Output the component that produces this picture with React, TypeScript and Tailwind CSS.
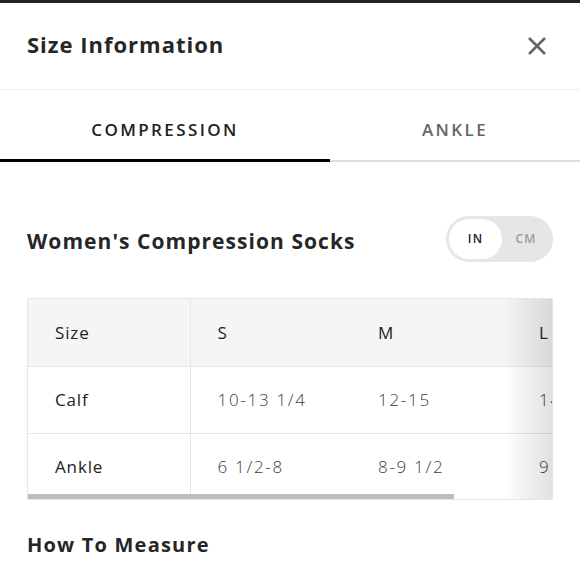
import { useState } from "react";

const rows = [
    { label: "Calf", values: ["10-13 1/4", "12-15", "14-17"] },
    { label: "Ankle", values: ["6 1/2-8", "8-9 1/2", "9 1/2-11"] },
];

const sizes = ["S", "M", "L"];

export default function App() {
    const [tab, setTab] = useState<"compression" | "ankle">("compression");
    const [unit, setUnit] = useState<"in" | "cm">("in");

    return (
        <div className="h-[580px] w-[580px] overflow-hidden bg-white text-[#222]" style={{ fontFamily: "'Open Sans', Lato, sans-serif" }}>
            <div className="h-[3px] bg-[#232323]" />

            {/* Header */}
            <div className="flex h-[87px] items-center justify-between border-b border-[#f0f0f0] pl-[27px] pr-[33px]">
                <h2 className="pb-[3px] text-[22px] font-bold tracking-[0.045em] text-[#262626]">Size Information</h2>
                <button className="text-[#666]" aria-label="Close">
                    <svg width="20" height="20" viewBox="0 0 20 20" fill="none" stroke="currentColor" strokeWidth="2.6">
                        <path d="M2 2L18 18M18 2L2 18" />
                    </svg>
                </button>
            </div>

            {/* Tabs */}
            <div className="flex h-[72px]">
                <button
                    onClick={() => setTab("compression")}
                    className={`w-[330px] border-b-[3px] pt-[10px] text-[17px] font-semibold tracking-[0.14em] ${tab === "compression" ? "border-black text-[#222]" : "border-[#ddd] text-[#666]"}`}
                >
                    COMPRESSION
                </button>
                <button
                    onClick={() => setTab("ankle")}
                    className={`flex-1 pt-[10px] text-[17px] font-semibold tracking-[0.14em] ${tab === "ankle" ? "border-b-[3px] border-black text-[#222]" : "border-b-2 border-[#ddd] text-[#666]"}`}
                >
                    ANKLE
                </button>
            </div>

            {/* Title + unit toggle */}
            <div className="mt-[54px] flex items-center justify-between pl-[27px] pr-[27px]">
                <h3 className="pt-[6px] text-[21px] font-bold tracking-[0.05em] text-[#262626]">Women's Compression Socks</h3>
                <div className="flex h-[46px] w-[107px] items-center rounded-full bg-[#e6e6e6] p-[3px]">
                    <button
                        onClick={() => setUnit("in")}
                        className={`flex h-full w-[53px] items-center justify-center rounded-full text-[12px] font-semibold tracking-[0.1em] ${unit === "in" ? "bg-white text-[#222]" : "text-[#9a9a9a]"}`}
                    >
                        IN
                    </button>
                    <button
                        onClick={() => setUnit("cm")}
                        className={`flex h-full flex-1 items-center justify-center rounded-full text-[12px] font-semibold tracking-[0.1em] ${unit === "cm" ? "bg-white text-[#222]" : "text-[#9a9a9a]"}`}
                    >
                        CM
                    </button>
                </div>
            </div>

            {/* Table */}
            <div className="relative mx-[27px] mt-[36px] h-[202px] overflow-hidden border border-[#e6e6e6]">
                <table className="w-[700px] table-fixed border-collapse text-[17px]">
                    <colgroup>
                        <col className="w-[162px]" />
                        <col className="w-[161px]" />
                        <col className="w-[161px]" />
                        <col className="w-[216px]" />
                    </colgroup>
                    <thead>
                        <tr className="h-[67px] bg-[#f5f5f5]">
                            <th className="border-r border-[#e6e6e6] pl-[27px] text-left font-normal tracking-[0.05em] text-[#222]">Size</th>
                            {sizes.map((s) => (
                                <th key={s} className="pl-[27px] text-left font-normal text-[#222]">{s}</th>
                            ))}
                        </tr>
                    </thead>
                    <tbody>
                        {rows.map((r) => (
                            <tr key={r.label} className="h-[67px] border-t border-[#e6e6e6]">
                                <td className="border-r border-[#e6e6e6] pl-[27px] tracking-[0.05em] text-[#222]">{r.label}</td>
                                {r.values.map((v) => (
                                    <td key={v} className="pl-[27px] font-light tracking-[0.1em] text-[#3c3c3c]">{v}</td>
                                ))}
                            </tr>
                        ))}
                    </tbody>
                </table>
                <div className="pointer-events-none absolute right-0 top-0 h-full w-[48px] bg-gradient-to-r from-black/0 to-black/12" />
                <div className="absolute bottom-0 left-0 h-[5px] w-[426px] bg-[#bdbdbd]" />
            </div>

            <h3 className="mt-[30px] pl-[27px] text-[20px] font-bold tracking-[0.06em] text-[#262626]">How To Measure</h3>
        </div>
    );
}
